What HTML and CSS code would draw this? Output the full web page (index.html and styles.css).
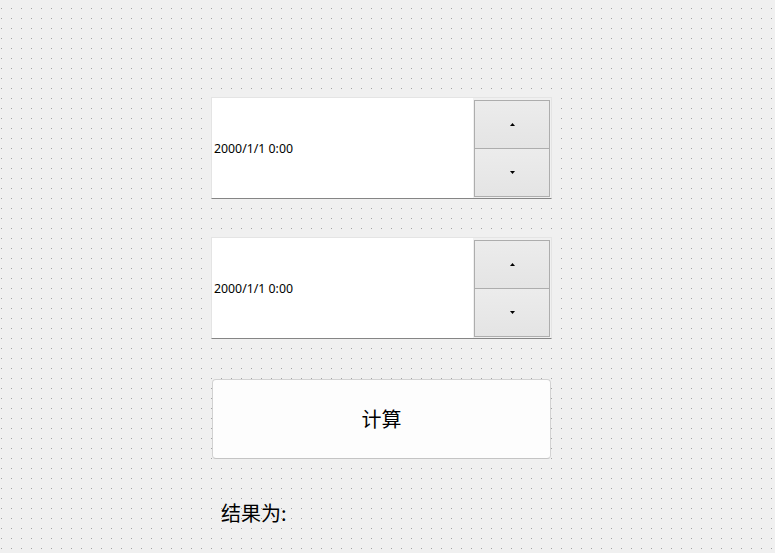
FILE: index.html
```html
<!DOCTYPE html>
<html lang="zh-CN">
<head>
    <meta charset="UTF-8">
    <meta name="viewport" content="width=device-width, initial-scale=1.0">
    <title>计算</title>
    <link rel="stylesheet" href="styles.css">
</head>
<body>
    <div class="form">
        <div class="datetime">
            <div class="datetime-text">2000/1/1 0:00</div>
            <div class="spin">
                <div class="spin-buttons">
                    <div class="spin-button">
                        <svg width="5" height="3" viewBox="0 0 5 3"><polygon points="2.5,0 5,3 0,3" fill="#000"/></svg>
                    </div>
                    <div class="spin-button down">
                        <svg width="5" height="3" viewBox="0 0 5 3"><polygon points="0,0 5,0 2.5,3" fill="#000"/></svg>
                    </div>
                </div>
            </div>
        </div>
        <div class="datetime">
            <div class="datetime-text">2000/1/1 0:00</div>
            <div class="spin">
                <div class="spin-buttons">
                    <div class="spin-button">
                        <svg width="5" height="3" viewBox="0 0 5 3"><polygon points="2.5,0 5,3 0,3" fill="#000"/></svg>
                    </div>
                    <div class="spin-button down">
                        <svg width="5" height="3" viewBox="0 0 5 3"><polygon points="0,0 5,0 2.5,3" fill="#000"/></svg>
                    </div>
                </div>
            </div>
        </div>
        <button class="calc-button">计算</button>
        <div class="result">结果为:</div>
    </div>
</body>
</html>
```

FILE: styles.css
```css
html, body {
    margin: 0;
    height: 100%;
}
body {
    font-family: "Noto Sans", "Noto Sans CJK SC", sans-serif;
    background-color: #f0f0f0;
    /* точечная сетка как в дизайнере форм */
    background-image: conic-gradient(from 270deg at 1px 1px, #a4a4a4 25%, transparent 0);
    background-size: 10px 10px;
    background-position: 1px 8px;
    overflow: hidden;
}
.form {
    display: flex;
    flex-direction: column;
    width: 341px;
    padding: 97px 0 0 211px;
}
.datetime {
    display: flex;
    height: 102px;
    box-sizing: border-box;
    border: 1px solid #e4e4e4;
    border-bottom-color: #858585;
    margin-bottom: 38px;
}
.datetime-text {
    flex: 1;
    display: flex;
    align-items: center;
    background-color: #fff;
    padding-left: 2px;
    font-size: 12.3px;
    color: #000;
}
.spin {
    width: 78px;
    box-sizing: border-box;
    padding: 2px 1px 1px 1px;
    background-color: #f0f0f0;
}
.spin-buttons {
    display: flex;
    flex-direction: column;
    height: 100%;
    box-sizing: border-box;
    border: 1px solid #adadad;
}
.spin-button {
    flex: 1;
    display: flex;
    align-items: center;
    justify-content: center;
    background: linear-gradient(#ececec, #e4e4e4);
}
.spin-button.down {
    border-top: 1px solid #adadad;
}
.spin-button svg {
    display: block;
}
.calc-button {
    margin: 2px 0 0 1px;
    width: 339px;
    height: 80px;
    border: 1px solid #d2d2d2;
    border-bottom-color: #c4c4c4;
    border-radius: 4px;
    background-color: #fdfdfd;
    font-family: "Noto Sans CJK SC", sans-serif;
    font-size: 20px;
    color: #000;
    padding: 0 0 2px 0;
}
.result {
    margin: 39px 0 0 10px;
    font-family: "Noto Sans CJK SC", sans-serif;
    font-size: 20px;
    color: #000;
}
```
